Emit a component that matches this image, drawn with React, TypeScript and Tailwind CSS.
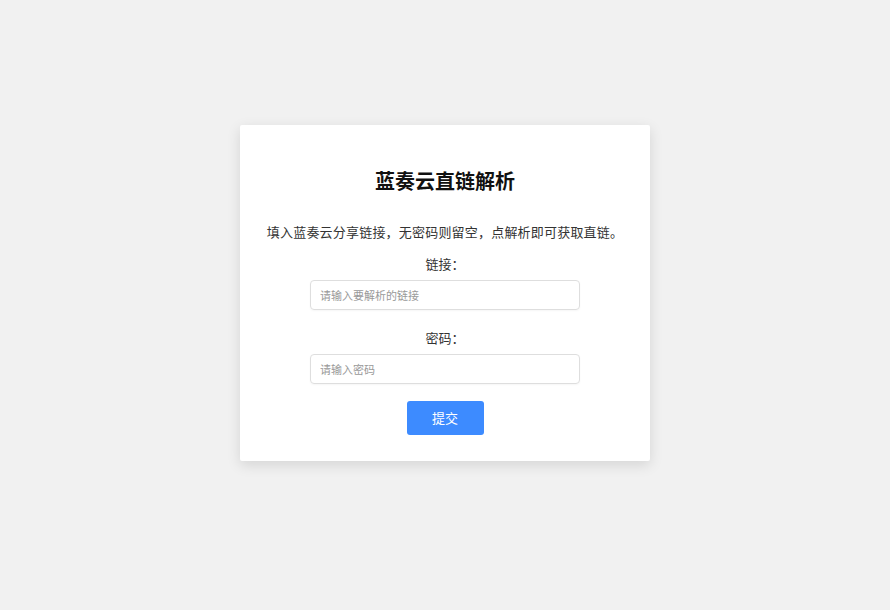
export default function App() {
  return (
    <div
      className="min-h-[610px] w-full bg-[#f1f1f1] flex justify-center pt-[125px]"
      style={{ fontFamily: '"Noto Sans CJK SC", "Noto Sans", sans-serif' }}
    >
      <div className="w-[410px] h-[336px] bg-white rounded-[2px] shadow-[0_4px_14px_rgba(0,0,0,0.12)] flex flex-col items-center">
        <h1 className="mt-[42px] text-[20px] leading-[28px] font-bold text-[#111]">
          蓝奏云直链解析
        </h1>
        <p className="mt-[27px] text-[13px] leading-[20px] tracking-[0.2px] text-[#333]">
          填入蓝奏云分享链接，无密码则留空，点解析即可获取直链。
        </p>
        <label className="mt-[12px] text-[13px] leading-[20px] text-[#333]">
          链接：
        </label>
        <input
          className="mt-[6px] w-[270px] h-[30px] border border-[#dedede] rounded-[4px] px-[9px] text-[11px] text-[#333] placeholder:text-[#999] outline-none shadow-[0_1px_2px_rgba(0,0,0,0.04)]"
          placeholder="请输入要解析的链接"
        />
        <label className="mt-[18px] text-[13px] leading-[20px] text-[#333]">
          密码：
        </label>
        <input
          className="mt-[6px] w-[270px] h-[30px] border border-[#dedede] rounded-[4px] px-[9px] text-[11px] text-[#333] placeholder:text-[#999] outline-none shadow-[0_1px_2px_rgba(0,0,0,0.04)]"
          placeholder="请输入密码"
        />
        <button className="mt-[17px] w-[77px] h-[34px] bg-[#3d8bff] rounded-[3px] text-white text-[13px]">
          提交
        </button>
      </div>
    </div>
  );
}
